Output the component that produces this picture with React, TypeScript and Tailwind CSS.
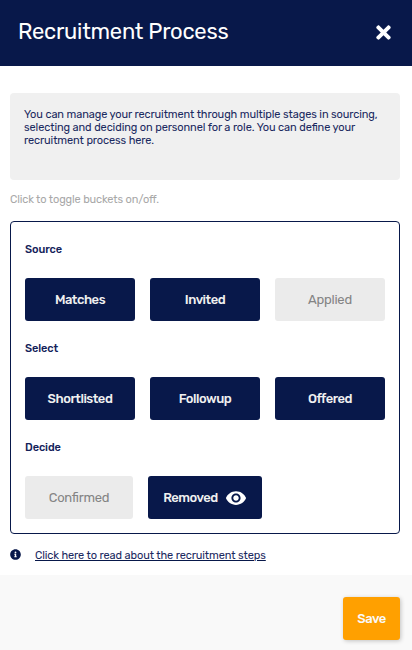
import { useState } from "react";
import clsx from "clsx";
import { FaInfoCircle, FaTimes } from "react-icons/fa";
import { MdVisibility } from "react-icons/md";

interface Bucket {
  name: string;
  on: boolean;
  hasEye?: boolean;
  width: string;
}

interface Stage {
  title: string;
  buckets: Bucket[];
}

const STAGES: Stage[] = [
  {
    title: "Source",
    buckets: [
      { name: "Matches", on: true, width: "w-[110px]" },
      { name: "Invited", on: true, width: "w-[110px]" },
      { name: "Applied", on: false, width: "w-[110px]" },
    ],
  },
  {
    title: "Select",
    buckets: [
      { name: "Shortlisted", on: true, width: "w-[110px]" },
      { name: "Followup", on: true, width: "w-[110px]" },
      { name: "Offered", on: true, width: "w-[110px]" },
    ],
  },
  {
    title: "Decide",
    buckets: [
      { name: "Confirmed", on: false, width: "w-[108px]" },
      { name: "Removed", on: true, hasEye: true, width: "w-[114px]" },
    ],
  },
];

function BucketButton({ bucket }: { bucket: Bucket }) {
  const [on, setOn] = useState(bucket.on);

  return (
    <button
      type="button"
      aria-pressed={on}
      onClick={() => setOn(!on)}
      className={clsx(
        "flex h-[43px] shrink-0 items-center justify-center gap-[7px] rounded-[3px] text-[13px]",
        bucket.width,
        on
          ? "bg-[#08184a] font-medium tracking-[-0.48px] text-[#f0f0f0]"
          : "bg-[#ebebeb] tracking-[-0.25px] text-[#848484]"
      )}
    >
      <span className="whitespace-nowrap">{bucket.name}</span>
      {bucket.hasEye ? <MdVisibility className="size-[22px] text-white" /> : null}
    </button>
  );
}

export default function App() {
  return (
    <div className="flex h-[650px] w-[412px] flex-col overflow-hidden bg-white font-[Rubik,Roboto,sans-serif] text-[#08184a] [font-feature-settings:'liga'_1]">
      <header className="flex h-[66px] shrink-0 items-center justify-between bg-[#08184a] pr-[18px] pb-[2px] pl-[18px] text-white">
        <h1 className="text-[22px] leading-[26px] tracking-[-0.25px] whitespace-nowrap">Recruitment Process</h1>
        <button type="button" aria-label="Close">
          <FaTimes className="size-[21px]" />
        </button>
      </header>

      <main className="flex h-[509px] shrink-0 flex-col pt-[27px] pr-3 pl-[10px]">
        <p className="h-[87px] rounded-[4px] bg-[#f0f0f0] px-[14px] pt-[15px] text-[11px] leading-[13px] tracking-[-0.1px] text-[#1a2960]">
          You can manage your recruitment through multiple stages in sourcing,
          <br />
          selecting and deciding on personnel for a role. You can define your
          <br />
          recruitment process here.
        </p>
        <p className="mt-[13px] text-[11px] leading-[13px] tracking-[-0.12px] text-[#a8a8a8]">
          Click to toggle buckets on/off.
        </p>

        <div className="mt-[15px] flex h-[313px] flex-col gap-[15px] rounded-[4px] border border-[#08184a] px-[14px] pt-[14px]">
          {STAGES.map((stage) => (
            <section key={stage.title} className="flex h-[84px] flex-col gap-[22px] pt-[7px]">
              <h2 className="text-[11px] leading-[13px] font-medium tracking-[-0.08px] text-[#13225a]">
                {stage.title}
              </h2>
              <div className="flex gap-[15px]">
                {stage.buckets.map((bucket) => (
                  <BucketButton key={bucket.name} bucket={bucket} />
                ))}
              </div>
            </section>
          ))}
        </div>

        <div className="mt-[15px] flex h-[13px] items-center text-[11px] leading-[13px]">
          <FaInfoCircle className="mb-[2px] size-[11px]" />
          <a href="#" className="ml-[14px] tracking-[-0.1px] text-[#1a2960] underline decoration-[#08184a]">
            Click here to read about the recruitment steps
          </a>
        </div>
      </main>

      <footer className="flex flex-1 justify-end bg-[#f9f9f9] pt-[22px] pr-3">
        <button
          type="button"
          className="h-[43px] w-[57px] rounded-[3px] bg-[#ffa000] text-[13px] font-medium tracking-[-0.48px] text-[#f9f9f9] shadow-[1px_1px_4px_rgba(0,0,0,0.22)]"
        >
          Save
        </button>
      </footer>
    </div>
  );
}
